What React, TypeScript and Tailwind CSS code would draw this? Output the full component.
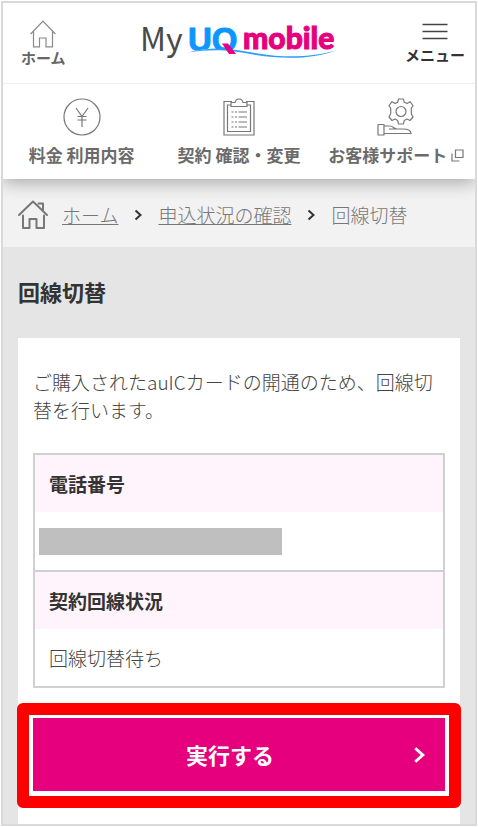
import React from "react";

function Logo() {
  return (
    <svg width="208" height="56" viewBox="-3 0 208 56" role="img" aria-label="My UQ mobile">
      <text x="-2" y="40" fontSize="32" fill="#4a4a4a" className="font-['Noto_Sans_CJK_JP',sans-serif]">
        My
      </text>
      <text x="46" y="40" fontSize="33" fill="#0d96ff" stroke="#0d96ff" strokeWidth="1" className="font-['Liberation_Sans',sans-serif] font-bold">
        UQ
      </text>
      <path d="M46 41 C62 37.500 80 37 98 40.500 L98 48 L46 48 Z" fill="#fff" />
      <path d="M46 41.500 C76 34 92 39 116 42.500 C146 47.500 172 45.500 194 39.500 C172 48 142 48.500 114 44 C90 39.500 72 37.500 46 41.500 Z" fill="#2a9dfa" />
      <path d="M80 32.500 L86 32.500 L94 43 L87 43 Z" fill="#e6007e" />
      <text x="101" y="38" fontSize="30" fill="#e6007e" stroke="#e6007e" strokeWidth="1" className="font-['Lato',sans-serif] font-black">
        mobile
      </text>
    </svg>
  );
}

function HomeOutline() {
  return (
    <svg width="26" height="28" viewBox="0 0 26 28" fill="none" stroke="#8a8a8a" strokeWidth="1.2" aria-hidden="true">
      <path d="M.6 14 L13 1 L25.400 14 M3.500 11.500 V26.800 H9.500 V18 H16 V26.800 H22.500 V11.500" />
    </svg>
  );
}

function YenIcon() {
  return (
    <svg width="38" height="38" viewBox="0 0 38 38" fill="none" stroke="#777" strokeWidth="1.2" aria-hidden="true">
      <circle cx="19" cy="19" r="18" />
      <path d="M13 10 L19 18.500 L25 10 M19 18.500 V29 M14.500 18.500 H23.500 M14.500 22 H23.500" />
    </svg>
  );
}

function ClipboardIcon() {
  return (
    <svg width="32" height="38" viewBox="0 0 32 38" fill="none" stroke="#777" strokeWidth="1.200" aria-hidden="true">
      <path d="M9 3.500 H1 V37 H31 V3.500 H23" />
      <path d="M9 7 H4.500 V33.500 H27.500 V7 H23" />
      <path d="M8 8.500 V4.500 H12 C12.500 2 14 1 16 1 C18 1 19.500 2 20 4.500 H24 V8.500 Z" fill="#fff" />
      <path strokeDasharray="2 1.500" d="M8.500 14 H14 M8.500 19 H14 M8.500 24 H14 M8.500 29 H14" />
      <path d="M15.500 14 H24 M15.500 19 H24 M15.500 24 H24 M15.500 29 H24" />
    </svg>
  );
}

function SupportIcon() {
  return (
    <svg width="38" height="38" viewBox="0 0 38 38" fill="none" stroke="#777" strokeWidth="1.200" strokeLinejoin="round" aria-hidden="true">
      <path d="M21.500 1 H26.500 L27.200 4.300 L30 5.500 L33 3.700 L36 7.500 L34.300 10.300 L34.300 15.800 L36 19 L33 22.500 L30 21 L27.200 22.500 L26.500 26 H21.500 L20.700 22.500 L18 21 L15 22.500 L12 19 L13.700 15.800 V10.300 L12 7.500 L15 3.700 L18 5.500 L20.700 4.300 Z" />
      <circle cx="24" cy="13.500" r="5" />
      <path d="M1 26.500 H7 V37 H1 Z M7 28 H13 C16 28 17 31 20 31 H26 C31 31 34 33 34 35.500 H7 M12 31 H20" />
    </svg>
  );
}

function ExternalIcon() {
  return (
    <svg width="13" height="13" viewBox="0 0 13 13" fill="none" stroke="#777" strokeWidth="1.200" aria-hidden="true">
      <path d="M4.500 1 H12 V8.500 H4.500 Z M1 4.500 V12 H8.500" />
    </svg>
  );
}

function BreadcrumbHome() {
  return (
    <svg width="30" height="30" viewBox="0 0 30 30" fill="none" stroke="#777" strokeWidth="2" strokeLinejoin="round" strokeLinecap="round" aria-hidden="true">
      <path d="M1 15 L15 1.500 L29 15 M5 15.500 V28 H11.500 V19 H18.500 V28 H26 V15.500 M20.500 3.500 H25 V10" />
    </svg>
  );
}

function Chevron({ className }: { className: string }) {
  return (
    <svg viewBox="0 0 8 12" fill="none" stroke="currentColor" strokeWidth="2" className={className} aria-hidden="true">
      <path d="M1.500 1.500 L6.500 6 L1.500 10.500" />
    </svg>
  );
}

const navItem = "flex flex-col items-center gap-[7px] whitespace-nowrap text-[17px] leading-6 font-bold text-[#6b6b6b]";

export default function App() {
  return (
    <div className="bg-white p-px font-['Noto_Sans_CJK_JP',sans-serif]">
      <div className="overflow-hidden border-2 border-[#d9d9d9] bg-[#e5e5e5]">
        <div className="relative bg-white shadow-[0_4px_16px_rgba(0,0,0,0.3)]">
          <header className="grid h-[81px] grid-cols-[1fr_auto_1fr] items-start border-b border-[#f0f0f0] pr-2.5 pl-[18px]">
            <a href="#home" className="flex flex-col items-center justify-self-start pt-[17px] text-[15px] leading-5 font-bold text-[#666]">
              <HomeOutline />
              <span>ホーム</span>
            </a>
            <div className="pt-2">
              <Logo />
            </div>
            <button type="button" className="flex flex-col items-center justify-self-end pt-5 text-[15px] leading-5 font-bold text-[#333]">
              <svg width="26" height="18" viewBox="0 0 26 18" stroke="#444" strokeWidth="1.500" aria-hidden="true">
                <path d="M.5 1.500 H25.500 M.5 8.500 H25.500 M.5 15.500 H25.500" />
              </svg>
              <span className="pt-1">メニュー</span>
            </button>
          </header>
          <nav className="grid grid-cols-3 pt-3.5 pb-3">
            <a href="#fee" className={navItem}>
              <YenIcon />
              料金 利用内容
            </a>
            <a href="#contract" className={navItem}>
              <ClipboardIcon />
              契約 確認・変更
            </a>
            <a href="#support" className={navItem}>
              <SupportIcon />
              <span className="flex items-center gap-1">
                お客様サポート
                <ExternalIcon />
              </span>
            </a>
          </nav>
        </div>

        <nav aria-label="パンくず" className="flex h-[68px] items-center bg-[#f2f2f2] pt-1 pl-[15px] text-[19px] whitespace-nowrap text-[#777]">
          <a href="#home" aria-label="ホーム">
            <BreadcrumbHome />
          </a>
          <a href="#home" className="ml-3.5 font-light underline underline-offset-1">ホーム</a>
          <Chevron className="mx-4 h-3 w-2 text-[#333]" />
          <a href="#status" className="font-light underline underline-offset-1">申込状況の確認</a>
          <Chevron className="mx-4 h-3 w-2 text-[#333]" />
          <span className="font-light">回線切替</span>
        </nav>

        <main className="px-[15px] pt-7">
          <h1 className="text-[22px] leading-8 font-bold text-[#333]">回線切替</h1>
          <section className="mt-[31px] bg-white px-[15px] pt-[30px] pb-[33px]">
            <p className="text-[19px] leading-7 font-light text-[#444]">
              ご購入されたauICカードの開通のため、回線切替を行います。
            </p>
            <table className="mt-[29px] w-full border-collapse border-2 border-[#d0d0d0] text-left text-[19px] leading-7 text-[#333]">
              <tbody>
                <tr className="h-[58px] bg-[#fff4fb]">
                  <th scope="row" className="px-3.5 font-bold">電話番号</th>
                </tr>
                <tr className="h-[59px]">
                  <td className="px-1">
                    <div className="h-[27px] w-[243px] bg-[#bfbfbf]" />
                  </td>
                </tr>
                <tr className="h-[58px] border-t-2 border-[#d0d0d0] bg-[#fff4fb]">
                  <th scope="row" className="px-3.5 font-bold">契約回線状況</th>
                </tr>
                <tr className="h-[58px]">
                  <td className="px-3.5 font-light text-[#444]">回線切替待ち</td>
                </tr>
              </tbody>
            </table>
            <div className="relative mt-[30px]">
              <button type="button" className="flex h-[73px] w-full items-center bg-[#e6007e] px-5 text-[22px] font-bold text-white">
                <span className="flex-1 pr-1.5">実行する</span>
                <Chevron className="h-[18px] w-3" />
              </button>
              <div className="pointer-events-none absolute -inset-x-4 -top-[15px] -bottom-[17px] rounded-md border-[12px] border-[#ff0000]" />
            </div>
          </section>
        </main>
      </div>
    </div>
  );
}
